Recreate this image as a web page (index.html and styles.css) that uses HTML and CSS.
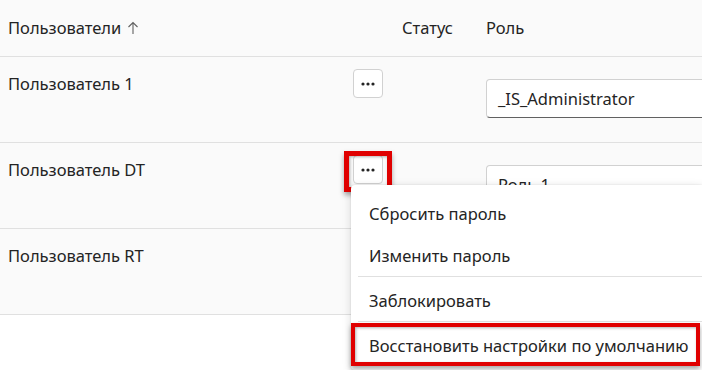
FILE: index.html
```html
<!DOCTYPE html>
<html lang="ru">
<head>
    <meta charset="UTF-8">
    <meta name="viewport" content="width=device-width, initial-scale=1.0">
    <title>Пользователи</title>
    <link rel="stylesheet" href="styles.css">
</head>
<body>
    <div class="users">
        <div class="users-head">
            <div class="cell cell-name">
                Пользователи
                <svg class="sort-icon" width="12" height="14" viewBox="0 0 12 14">
                    <path d="M6 13V1.5M1.5 6L6 1.5L10.5 6" fill="none" stroke="#616161" stroke-width="1.1"/>
                </svg>
            </div>
            <div class="cell cell-status">Статус</div>
            <div class="cell cell-role">Роль</div>
        </div>

        <div class="users-row">
            <div class="cell cell-name">
                <span class="user-name">Пользователь 1</span>
                <button class="more-btn">
                    <svg width="16" height="4" viewBox="0 0 16 4"><circle cx="3" cy="2" r="1.6"/><circle cx="8" cy="2" r="1.6"/><circle cx="13" cy="2" r="1.6"/></svg>
                </button>
            </div>
            <div class="cell cell-status"></div>
            <div class="cell cell-role">
                <div class="role-select">_IS_Administrator</div>
            </div>
        </div>

        <div class="users-row">
            <div class="cell cell-name">
                <span class="user-name">Пользователь DT</span>
                <button class="more-btn is-open">
                    <svg width="16" height="4" viewBox="0 0 16 4"><circle cx="3" cy="2" r="1.6"/><circle cx="8" cy="2" r="1.6"/><circle cx="13" cy="2" r="1.6"/></svg>
                    <span class="mark mark-btn"></span>
                </button>
                <div class="menu">
                    <div class="menu-item">Сбросить пароль</div>
                    <div class="menu-item">Изменить пароль</div>
                    <div class="menu-divider"></div>
                    <div class="menu-item">Заблокировать</div>
                    <div class="menu-divider"></div>
                    <div class="menu-item is-marked">
                        Восстановить настройки по умолчанию
                        <span class="mark mark-item"></span>
                    </div>
                </div>
            </div>
            <div class="cell cell-status"></div>
            <div class="cell cell-role">
                <div class="role-select">Роль 1</div>
            </div>
        </div>

        <div class="users-row">
            <div class="cell cell-name">
                <span class="user-name">Пользователь RT</span>
            </div>
            <div class="cell cell-status"></div>
            <div class="cell cell-role"></div>
        </div>
    </div>
</body>
</html>
```

FILE: styles.css
```css
:root {
    --row-bg: #fafafa;
    --text: #242424;
    --border: #e0e0e0;
    --mark: #e00000;
}

* {
    margin: 0;
    padding: 0;
    box-sizing: border-box;
}

body {
    background: #ffffff;
    color: var(--text);
    font-family: "Noto Sans", "Open Sans", sans-serif;
    font-size: 16.5px;
    overflow: hidden;
    width: 702px;
    height: 370px;
}

.users {
    width: 702px;
    overflow: hidden;
    height: 370px;
}

.users-head,
.users-row {
    display: grid;
    grid-template-columns: 390px 84px 1fr;
    background: var(--row-bg);
    border-bottom: 1px solid var(--border);
}

.users-head {
    height: 57px;
    align-items: center;
}

.users-head .cell {
    padding: 0 12px;
    line-height: 20px;
}

.users-head .cell-name {
    padding-left: 8px;
    display: flex;
    align-items: center;
    gap: 6px;
}

.sort-icon {
    margin-top: -1px;
}

.users-row {
    height: 86px;
}

.users-row .cell-name {
    position: relative;
    display: flex;
    justify-content: space-between;
    align-items: flex-start;
    padding: 12px 7px 0 8px;
}

.user-name {
    padding-top: 4px;
    line-height: 22px;
}

.more-btn {
    position: relative;
    width: 30px;
    height: 29px;
    background: #ffffff;
    border: 1px solid #d1d1d1;
    border-radius: 4px;
    display: flex;
    align-items: center;
    justify-content: center;
    fill: var(--text);
}

.users-row .cell-role {
    padding: 22px 0 0 12px;
    overflow: hidden;
}

.role-select {
    height: 39px;
    margin-right: -10px;
    background: #ffffff;
    border: 1px solid #d1d1d1;
    border-bottom-color: #616161;
    border-radius: 4px;
    padding-left: 11px;
    display: flex;
    align-items: center;
}

.menu {
    position: absolute;
    left: 351px;
    top: 42px;
    width: 351px;
    background: #ffffff;
    border-radius: 4px 0 0 4px;
    box-shadow: 0 2px 10px rgba(0, 0, 0, 0.14), 0 0 2px rgba(0, 0, 0, 0.12);
    padding: 7px 0 4px;
    z-index: 5;
}

.menu-item {
    position: relative;
    height: 42px;
    padding-left: 18px;
    display: flex;
    align-items: center;
    white-space: nowrap;
}

.menu-divider {
    height: 1px;
    background: var(--border);
    margin: 0 0 2px 7px;
}

.menu-divider + .menu-item.is-marked {
    margin-top: 2px;
}

.mark {
    position: absolute;
    border: 5px solid var(--mark);
    box-shadow: 0 3px 5px rgba(0, 0, 0, 0.35), inset 1px 1px 3px rgba(0, 0, 0, 0.3);
    pointer-events: none;
}

.mark-btn {
    left: -10px;
    top: -5px;
    width: 48px;
    height: 41px;
}

.mark-item {
    left: 0;
    top: -1px;
    width: 349px;
    height: 43px;
    border-width: 4px;
}
```
